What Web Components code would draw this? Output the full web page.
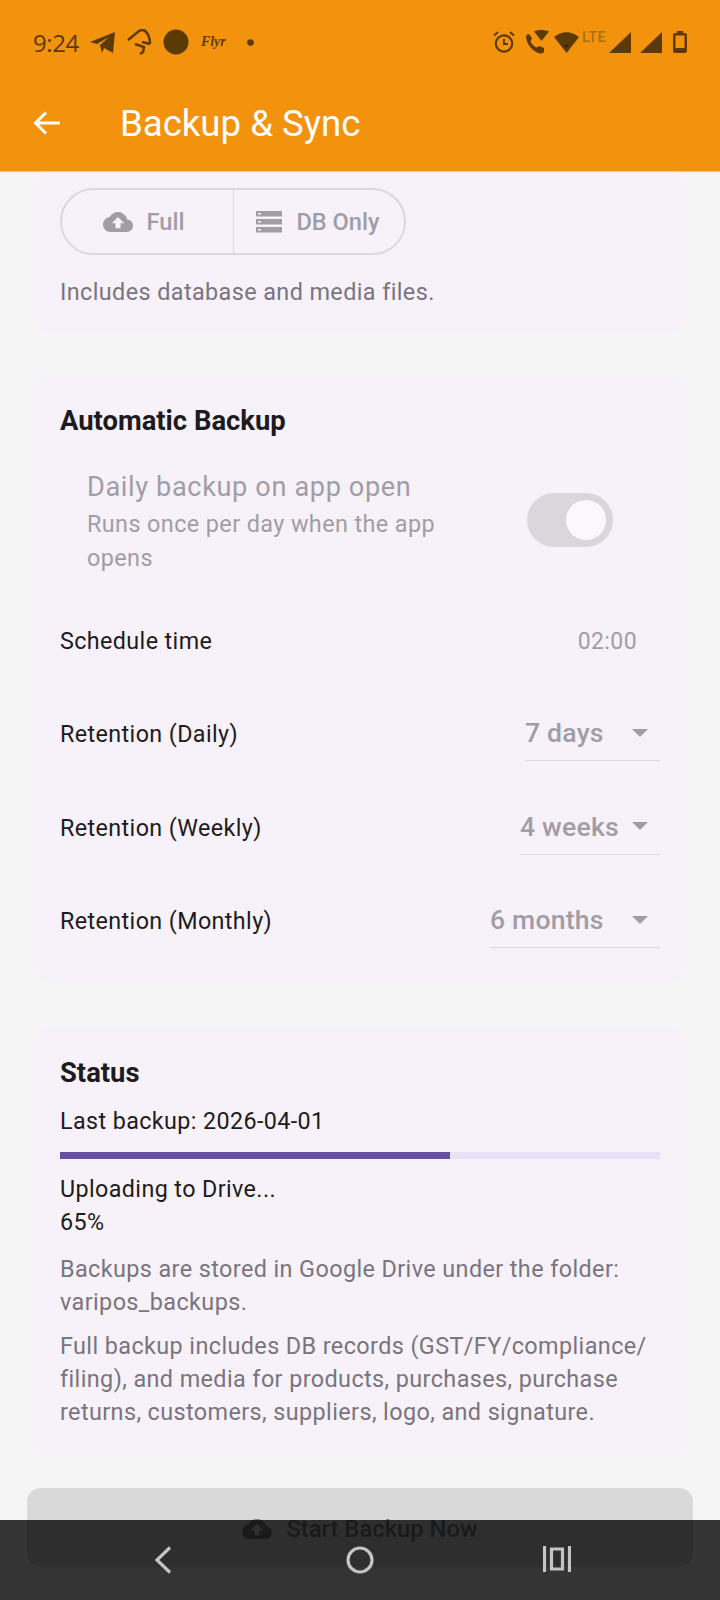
<!DOCTYPE html>
<html lang="en">
<head>
<meta charset="utf-8">
<title>Backup &amp; Sync</title>
<style>
    html, body {
        margin: 0;
        height: 1600px;
        overflow: hidden;
        background: #f5f5f5;
        font-family: Roboto, "Liberation Sans", sans-serif;
    }
</style>
</head>
<body>
<backup-screen>
    <app-header title="Backup &amp; Sync"></app-header>
    <section-card style="padding: 17px 28px 24.5px">
        <type-toggle></type-toggle>
        <help-text style="margin-top: 20.5px">Includes database and media files.</help-text>
    </section-card>
    <section-card style="margin-top: 42px; padding: 29px 28px 14.3px">
        <card-title>Automatic Backup</card-title>
        <switch-row style="margin-top: 30px" label="Daily backup on app open" sub="Runs once per day when the app opens"></switch-row>
        <setting-row style="margin-top: 19.5px" label="Schedule time"><span style="margin-right: 23px; font-size: 23px">02:00</span></setting-row>
        <setting-row label="Retention (Daily)"><drop-down value="7 days" width="135"></drop-down></setting-row>
        <setting-row label="Retention (Weekly)"><drop-down value="4 weeks" width="140"></drop-down></setting-row>
        <setting-row label="Retention (Monthly)"><drop-down value="6 months" width="170"></drop-down></setting-row>
    </section-card>
    <section-card style="margin-top: 45px; padding: 29px 28px 28px">
        <card-title>Status</card-title>
        <body-line style="margin-top: 15.5px">Last backup: 2026-04-01</body-line>
        <progress-line value="65" style="margin-top: 13.5px"></progress-line>
        <body-line style="margin-top: 14.5px">Uploading to Drive...</body-line>
        <body-line>65%</body-line>
        <help-text style="margin-top: 13.5px">Backups are stored in Google Drive under the folder: varipos_backups.</help-text>
        <help-text style="margin-top: 11px">Full backup includes DB records (GST/FY/compliance/<br>filing), and media for products, purchases, purchase returns, customers, suppliers, logo, and signature.</help-text>
    </section-card>
    <start-button style="margin-top: 31px">Start Backup Now</start-button>
    <nav-bar></nav-bar>
</backup-screen>

<script>
const CLOUD_UP = 'M19.35 10.04A7.49 7.49 0 0 0 12 4C9.11 4 6.6 5.64 5.35 8.04A5.994 5.994 0 0 0 0 14c0 3.31 2.69 6 6 6h13c2.76 0 5-2.24 5-5 0-2.64-2.05-4.78-4.65-4.96zM14 13v4h-4v-4H7l5-5 5 5h-3z';

class BackupScreen extends HTMLElement {
    constructor() {
        super();
        this.attachShadow({ mode: 'open' });
        this.shadowRoot.innerHTML = `
            <style>
                :host {
                    display: flex;
                    flex-direction: column;
                    position: relative;
                    width: 720px;
                    height: 1600px;
                    overflow: hidden;
                }
            </style>
            <slot></slot>
        `;
    }
}

class AppHeader extends HTMLElement {
    constructor() {
        super();
        this.attachShadow({ mode: 'open' });
    }

    connectedCallback() {
        this.shadowRoot.innerHTML = `
            <style>
                :host {
                    display: block;
                    flex: none;
                    height: 171px;
                    background: #f3920d;
                    box-shadow: 0 1px 1px rgba(240, 150, 40, 0.5);
                    position: relative;
                    z-index: 1;
                }
                .status {
                    display: flex;
                    align-items: center;
                    height: 84px;
                    padding: 0 33px 0 33px;
                    color: #5c3a06;
                }
                .time {
                    font: 400 24px "Open Sans", Roboto, sans-serif;
                    margin-right: 11px;
                    letter-spacing: -0.4px;
                }
                svg { display: block; fill: #5c3a06; flex: none; }
                .flyr {
                    font: italic 700 14px "Liberation Serif", serif;
                    margin: 0 21px 0 12px;
                }
                .spacer { flex: 1; }
                .lte {
                    font: 500 14.5px Roboto, sans-serif;
                    color: #a87010;
                    align-self: flex-start;
                    margin: 29px 3px 0 3px;
                    letter-spacing: 0.3px;
                }
                .bar {
                    display: flex;
                    align-items: center;
                    height: 78px;
                    padding-left: 33px;
                    color: #fff;
                }
                .bar svg { fill: none; margin-right: 59px; }
                h1 {
                    font: 400 36.6px Roboto, sans-serif;
                    margin: 0;
                }
            </style>
            <div class="status">
                <span class="time">9:24</span>
                <svg width="25" height="22" viewBox="0 0 25 22" style="margin-right:12px"><path d="M0 11 25 1 23 22 14 17 12 22 10 14 19 6 7 13z"/></svg>
                <svg width="25" height="26" viewBox="0 0 25 26" style="margin-right:11px" fill="none"><path d="M1 11 12 2C15 0 18 1 20 4 22 7 23 10 23 15M15 13 23 15M8 15 17 18 16 23 13 25" fill="none" stroke="#5c3a06" stroke-width="2.5"/></svg>
                <svg width="26" height="26" viewBox="0 0 26 26"><circle cx="13" cy="13" r="12.5"/></svg>
                <span class="flyr">Flyr</span>
                <svg width="7" height="7" viewBox="0 0 7 7"><circle cx="3.500" cy="3.500" r="3.300"/></svg>
                <span class="spacer"></span>
                <svg width="22" height="22" viewBox="0 0 22 22" style="margin-right:10px"><circle cx="11" cy="12.500" r="8.200" fill="none" stroke="#5c3a06" stroke-width="2.200"/><path d="M11 8v5h4" fill="none" stroke="#5c3a06" stroke-width="2"/><path d="M1 4.500 5 1M21 4.500 17 1" stroke="#5c3a06" stroke-width="2" fill="none"/></svg>
                <svg width="24" height="24" viewBox="0 0 24 24" style="margin-right:5px"><path d="M1 6.500C1 5 3 3.500 4.500 4.500L7 8.500 5.500 11.500C6.500 14 9 16.500 11.500 17.500L14.500 16 19 18V21.500C18 24 15 24 12 22.500 6 19.500 1 12.500 1 6.500z"/><path d="M9 1.500C13-.5 19-.5 24 1.500L16.500 11z"/></svg>
                <svg width="25" height="21" viewBox="0 0 25 21"><path d="M0 5C7.500-1.500 17.500-1.500 25 5L12.500 21z"/><path d="M10.500 13h4l-2 2.500z" fill="#2d1c02"/></svg>
                <span class="lte">LTE</span>
                <svg width="22" height="21" viewBox="0 0 22 21" style="margin-right:9px"><path d="M22 0V21H0z"/></svg>
                <svg width="22" height="21" viewBox="0 0 22 21" style="margin-right:11px"><path d="M22 0V21H0z"/></svg>
                <svg width="14" height="22" viewBox="0 0 14 22"><path d="M4 0h6v2h2c1 0 2 1 2 2v16c0 1-1 2-2 2H2c-1 0-2-1-2-2V4c0-1 1-2 2-2h2zM2.500 4.500V17h9V4.500z" fill-rule="evenodd"/></svg>
            </div>
            <div class="bar">
                <svg width="28" height="28" viewBox="0 0 28 28"><path d="M27 14H3M13 3.500 2.500 14 13 24.500" stroke="#fff" stroke-width="3"/></svg>
                <h1>${this.getAttribute('title')}</h1>
            </div>
        `;
    }
}

class SectionCard extends HTMLElement {
    constructor() {
        super();
        this.attachShadow({ mode: 'open' });
        this.shadowRoot.innerHTML = `
            <style>
                :host {
                    display: block;
                    flex: none;
                    margin: 0 32px;
                    background: #f7f2fa;
                    border-radius: 20px;
                }
            </style>
            <slot></slot>
        `;
    }
}

class CardTitle extends HTMLElement {
    constructor() {
        super();
        this.attachShadow({ mode: 'open' });
        this.shadowRoot.innerHTML = `
            <style>
                :host {
                    display: block;
                    font: 700 27.4px/34px Roboto, sans-serif;
                    color: #1d1b20;
                }
            </style>
            <slot></slot>
        `;
    }
}

class BodyLine extends HTMLElement {
    constructor() {
        super();
        this.attachShadow({ mode: 'open' });
        this.shadowRoot.innerHTML = `
            <style>
                :host {
                    display: block;
                    font: 400 23.3px/33px Roboto, sans-serif;
                    letter-spacing: 0.4px;
                    color: #1d1b20;
                }
            </style>
            <slot></slot>
        `;
    }
}

class HelpText extends HTMLElement {
    constructor() {
        super();
        this.attachShadow({ mode: 'open' });
        this.shadowRoot.innerHTML = `
            <style>
                :host {
                    display: block;
                    font: 400 23.4px/33px Roboto, sans-serif;
                    letter-spacing: 0.4px;
                    color: #79747e;
                }
            </style>
            <slot></slot>
        `;
    }
}

class TypeToggle extends HTMLElement {
    constructor() {
        super();
        this.attachShadow({ mode: 'open' });
        this.shadowRoot.innerHTML = `
            <style>
                :host {
                    display: flex;
                    width: 346px;
                    height: 67px;
                    box-sizing: border-box;
                    border: 2px solid #dcd8de;
                    border-radius: 34px;
                    color: #a19da6;
                    font: 500 23.6px Roboto, sans-serif;
                }
                div {
                    display: flex;
                    align-items: center;
                    justify-content: center;
                    gap: 14px;
                }
                .full { width: 172px; padding-right: 8px; box-sizing: border-box; border-right: 1.5px solid #dcd8de; }
                .db { flex: 1; padding-right: 2px; }
                svg { fill: #a19da6; display: block; }
            </style>
            <div class="full">
                <svg width="30" height="30" viewBox="0 0 24 24"><path d="${CLOUD_UP}"/></svg>
                <span>Full</span>
            </div>
            <div class="db">
                <svg width="26" height="22" viewBox="0 0 26 22"><path fill-rule="evenodd" d="M0 0h26v5.500H0zM0 8h26v5.500H0zM0 16h26v5.500H0zM2 2v1.500h3V2zM2 10v1.500h3V10zM2 18v1.500h3V18z"/></svg>
                <span>DB Only</span>
            </div>
        `;
    }
}

class SwitchRow extends HTMLElement {
    constructor() {
        super();
        this.attachShadow({ mode: 'open' });
    }

    connectedCallback() {
        this.shadowRoot.innerHTML = `
            <style>
                :host {
                    display: flex;
                    align-items: center;
                    padding-left: 27px;
                    padding-right: 47px;
                    color: #a19da6;
                }
                .text { width: 392px; margin-right: auto; }
                .label { font: 400 27.2px/36px Roboto, sans-serif; letter-spacing: 0.6px; margin-top: 1px; margin-bottom: 3px; }
                .sub { font: 400 23.4px/33.5px Roboto, sans-serif; letter-spacing: 0.4px; }
                .track {
                    flex: none;
                    width: 86px;
                    height: 54px;
                    margin-bottom: 4px;
                    border-radius: 27px;
                    background: #d9d6dc;
                    display: flex;
                    align-items: center;
                    justify-content: flex-end;
                    padding-right: 7px;
                    box-sizing: border-box;
                }
                .thumb {
                    width: 40px;
                    height: 40px;
                    border-radius: 50%;
                    background: #fbf7fd;
                }
            </style>
            <div class="text">
                <div class="label">${this.getAttribute('label')}</div>
                <div class="sub">${this.getAttribute('sub')}</div>
            </div>
            <div class="track"><div class="thumb"></div></div>
        `;
    }
}

class SettingRow extends HTMLElement {
    constructor() {
        super();
        this.attachShadow({ mode: 'open' });
    }

    connectedCallback() {
        this.shadowRoot.innerHTML = `
            <style>
                :host {
                    display: flex;
                    align-items: center;
                    justify-content: space-between;
                    height: 93.3px;
                    font: 400 23.3px Roboto, sans-serif;
                    letter-spacing: 0.4px;
                    color: #1d1b20;
                }
                .value { color: #a19da6; }
            </style>
            <span>${this.getAttribute('label')}</span>
            <span class="value"><slot></slot></span>
        `;
    }
}

class DropDown extends HTMLElement {
    constructor() {
        super();
        this.attachShadow({ mode: 'open' });
    }

    connectedCallback() {
        this.shadowRoot.innerHTML = `
            <style>
                :host {
                    display: flex;
                    align-items: center;
                    justify-content: space-between;
                    box-sizing: border-box;
                    width: ${this.getAttribute('width')}px;
                    height: 54px;
                    padding-right: 12px;
                    padding-bottom: 2px;
                    border-bottom: 1.5px solid #d9d6dc;
                    color: #a19da6;
                    font: 500 26.6px Roboto, sans-serif;
                    letter-spacing: 0.2px;
                }
                i {
                    width: 0;
                    height: 0;
                    border: 8px solid transparent;
                    border-top-color: #a19da6;
                    border-bottom: 0;
                }
            </style>
            <span>${this.getAttribute('value')}</span>
            <i></i>
        `;
    }
}

class ProgressLine extends HTMLElement {
    constructor() {
        super();
        this.attachShadow({ mode: 'open' });
    }

    connectedCallback() {
        this.shadowRoot.innerHTML = `
            <style>
                :host { display: block; height: 7px; background: #e8e0f5; }
                div { height: 100%; width: ${this.getAttribute('value')}%; background: #6750a4; }
            </style>
            <div></div>
        `;
    }
}

class StartButton extends HTMLElement {
    constructor() {
        super();
        this.attachShadow({ mode: 'open' });
        this.shadowRoot.innerHTML = `
            <style>
                :host {
                    display: flex;
                    flex: none;
                    align-items: center;
                    justify-content: center;
                    gap: 14px;
                    margin: 0 27px;
                    height: 79px;
                    box-sizing: border-box;
                    padding-top: 4px;
                    border-radius: 14px;
                    background: #d9d9d9;
                    color: #7c7c7c;
                    font: 500 23.8px Roboto, sans-serif;
                }
                svg { fill: #7c7c7c; display: block; }
            </style>
            <svg width="30" height="30" viewBox="0 0 24 24"><path d="${CLOUD_UP}"/></svg>
            <span><slot></slot></span>
        `;
    }
}

class NavBar extends HTMLElement {
    constructor() {
        super();
        this.attachShadow({ mode: 'open' });
        this.shadowRoot.innerHTML = `
            <style>
                :host {
                    position: absolute;
                    left: 0;
                    right: 0;
                    bottom: 0;
                    height: 80px;
                    background: rgba(0, 0, 0, 0.79);
                    display: grid;
                    grid-template-columns: 1fr 1fr 1fr;
                    justify-items: center;
                    padding-top: 26px;
                    box-sizing: border-box;
                }
                svg { display: block; fill: none; stroke: #c4c4c4; stroke-width: 3.2; }
            </style>
            <svg style="margin-left:86px" width="20" height="28" viewBox="0 0 20 28"><path d="M17 1.500 4 14l13 12.500"/></svg>
            <svg width="28" height="28" viewBox="0 0 28 28"><circle cx="14" cy="14" r="12"/></svg>
            <svg style="margin-right:86px" width="28" height="26" viewBox="0 0 28 26"><path d="M1.500 0V26M26.500 0V26M8.500 3h11v20h-11z"/></svg>
        `;
    }
}

customElements.define('backup-screen', BackupScreen);
customElements.define('app-header', AppHeader);
customElements.define('section-card', SectionCard);
customElements.define('card-title', CardTitle);
customElements.define('body-line', BodyLine);
customElements.define('help-text', HelpText);
customElements.define('type-toggle', TypeToggle);
customElements.define('switch-row', SwitchRow);
customElements.define('setting-row', SettingRow);
customElements.define('drop-down', DropDown);
customElements.define('progress-line', ProgressLine);
customElements.define('start-button', StartButton);
customElements.define('nav-bar', NavBar);
</script>
</body>
</html>
